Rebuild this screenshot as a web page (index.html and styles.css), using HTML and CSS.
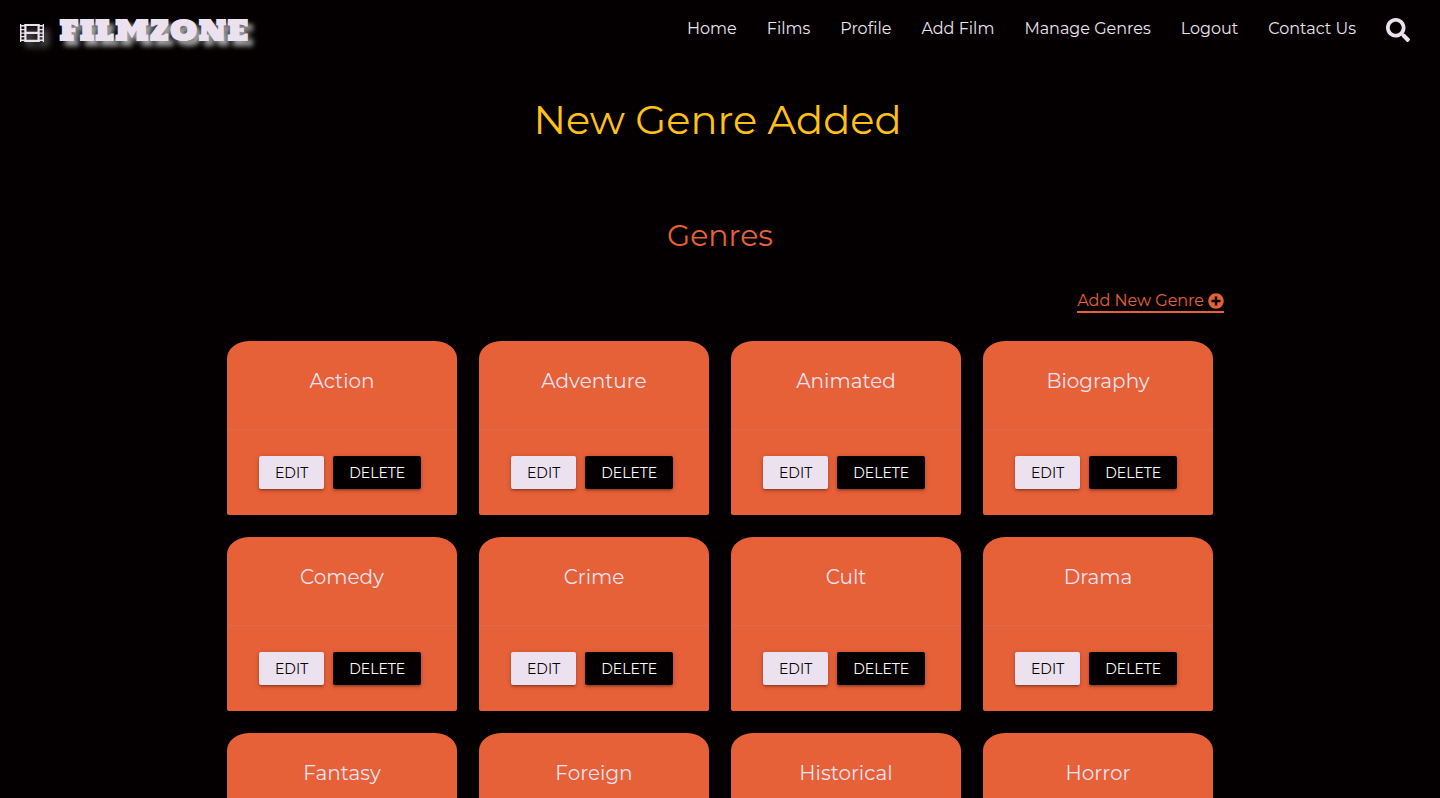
FILE: index.html
```html
<!DOCTYPE html>
<html lang="en">
<head>
<meta charset="utf-8">
<meta name="viewport" content="width=device-width, initial-scale=1">
<title>Filmzone - Genres</title>
<link rel="stylesheet" href="styles.css">
</head>
<body>
<header class="navbar">
  <a class="brand" href="#">
    <svg class="brand-icon" viewBox="0 0 24 18" aria-hidden="true">
      <path fill-rule="evenodd" d="M0 0h1.200v1h3V0h15.600v1h3V0H24v18h-1.200v-1h-3v1H4.200v-1h-3v1H0zM6.500 2v5.700h11V2zM6.500 10v5.700h11V10zM1.500 2.500V5h2.800V2.500zM1.500 6.200v2.300h2.800V6.200zM1.500 9.700V12h2.800V9.700zM1.500 13.200v2.300h2.800v-2.300zM19.700 2.500V5h2.800V2.500zM19.700 6.200v2.300h2.800V6.200zM19.700 9.700V12h2.800V9.700zM19.700 13.200v2.300h2.800v-2.300z"/>
    </svg>
    <span class="brand-name">FILMZONE</span>
  </a>
  <nav class="nav-links">
    <a href="#">Home</a>
    <a href="#">Films</a>
    <a href="#">Profile</a>
    <a href="#">Add Film</a>
    <a href="#">Manage Genres</a>
    <a href="#">Logout</a>
    <a href="#">Contact Us</a>
    <a class="search" href="#" aria-label="Search">
      <svg viewBox="0 0 512 512" aria-hidden="true"><path d="M505 442.7L405.3 343c-4.500-4.500-10.600-7-17-7H372c27.600-35.300 44-79.700 44-128C416 93.100 322.900 0 208 0S0 93.100 0 208s93.100 208 208 208c48.300 0 92.700-16.400 128-44v16.300c0 6.400 2.500 12.500 7 17l99.700 99.700c9.400 9.400 24.600 9.400 33.900 0l28.300-28.300c9.400-9.400 9.400-24.600.1-34zM208 336c-70.700 0-128-57.200-128-128 0-70.700 57.200-128 128-128 70.700 0 128 57.200 128 128 0 70.700-57.200 128-128 128z"/></svg>
    </a>
  </nav>
</header>
<main>
  <h1 class="flash">New Genre Added</h1>
  <h2 class="title">Genres</h2>
  <div class="container">
    <div class="toolbar">
      <a class="add-genre" href="#">Add New Genre
        <svg viewBox="0 0 512 512" aria-hidden="true"><path d="M256 8C119 8 8 119 8 256s111 248 248 248 248-111 248-248S393 8 256 8zm144 276c0 6.600-5.400 12-12 12h-92v92c0 6.600-5.400 12-12 12h-56c-6.600 0-12-5.400-12-12v-92h-92c-6.600 0-12-5.400-12-12v-56c0-6.600 5.400-12 12-12h92v-92c0-6.600 5.400-12 12-12h56c6.600 0 12 5.400 12 12v92h92c6.600 0 12 5.400 12 12v56z"/></svg>
      </a>
    </div>
    <div class="genres">
      <article class="card"><h3 class="card-title">Action</h3><div class="card-action"><button class="btn edit">EDIT</button><button class="btn delete">DELETE</button></div></article>
      <article class="card"><h3 class="card-title">Adventure</h3><div class="card-action"><button class="btn edit">EDIT</button><button class="btn delete">DELETE</button></div></article>
      <article class="card"><h3 class="card-title">Animated</h3><div class="card-action"><button class="btn edit">EDIT</button><button class="btn delete">DELETE</button></div></article>
      <article class="card"><h3 class="card-title">Biography</h3><div class="card-action"><button class="btn edit">EDIT</button><button class="btn delete">DELETE</button></div></article>
      <article class="card"><h3 class="card-title">Comedy</h3><div class="card-action"><button class="btn edit">EDIT</button><button class="btn delete">DELETE</button></div></article>
      <article class="card"><h3 class="card-title">Crime</h3><div class="card-action"><button class="btn edit">EDIT</button><button class="btn delete">DELETE</button></div></article>
      <article class="card"><h3 class="card-title">Cult</h3><div class="card-action"><button class="btn edit">EDIT</button><button class="btn delete">DELETE</button></div></article>
      <article class="card"><h3 class="card-title">Drama</h3><div class="card-action"><button class="btn edit">EDIT</button><button class="btn delete">DELETE</button></div></article>
      <article class="card"><h3 class="card-title">Fantasy</h3><div class="card-action"><button class="btn edit">EDIT</button><button class="btn delete">DELETE</button></div></article>
      <article class="card"><h3 class="card-title">Foreign</h3><div class="card-action"><button class="btn edit">EDIT</button><button class="btn delete">DELETE</button></div></article>
      <article class="card"><h3 class="card-title">Historical</h3><div class="card-action"><button class="btn edit">EDIT</button><button class="btn delete">DELETE</button></div></article>
      <article class="card"><h3 class="card-title">Horror</h3><div class="card-action"><button class="btn edit">EDIT</button><button class="btn delete">DELETE</button></div></article>
    </div>
  </div>
</main>
</body>
</html>
```
FILE: styles.css
```css
* { box-sizing: border-box; }

body {
  margin: 0;
  background: #040001;
  color: #ece2ef;
  font-family: Montserrat, Inter, "Open Sans", sans-serif;
  font-size: 16px;
}

a { color: inherit; text-decoration: none; }
h1, h2, h3 { margin: 0; font-weight: 400; }

.navbar {
  display: flex;
  justify-content: space-between;
  align-items: center;
  height: 60px;
  padding: 0 30px 0 20px;
}

.brand {
  display: flex;
  align-items: center;
  gap: 15px;
}

.brand-icon {
  width: 24px;
  height: 18px;
  margin-top: 5px;
  fill: #ece2ef;
  overflow: visible;
  filter: drop-shadow(5px 5px 3px #6a666b);
}

.brand-name {
  font: 400 30px/60px "Holtwood One SC", "Alfa Slab One", "DejaVu Serif", serif;
  text-shadow: 5px 5px 5px #a0a0a0;
}

.nav-links {
  display: flex;
  align-items: center;
  gap: 30px;
}

.nav-links a { line-height: 22px; padding-bottom: 2px; }
.nav-links .search { padding: 0; }

.search svg {
  display: block;
  width: 24px;
  height: 24px;
  fill: #ece2ef;
}

.flash {
  padding: 34px 5px 0 0;
  color: #ffc114;
  font-size: 40px;
  line-height: 52px;
  text-align: center;
}

.title {
  padding-top: 70px;
  color: #e66038;
  font-size: 30px;
  line-height: 40px;
  text-align: center;
}

.container {
  width: 70%;
  margin: 0 auto;
}

.toolbar {
  display: flex;
  justify-content: flex-end;
  padding: 35px 0 28px;
}

.add-genre {
  display: flex;
  align-items: center;
  gap: 4px;
  border-bottom: 2px solid #e66038;
  color: #e66038;
  line-height: 20px;
}

.add-genre svg {
  width: 16px;
  height: 16px;
  fill: #e66038;
}

.genres {
  display: grid;
  grid-template-columns: repeat(4, 1fr);
  gap: 22px;
  padding: 0 11px 22px;
}

.card {
  background: #e66038;
  border-radius: 10% 10% 2px 2px;
}

.card-title {
  padding: 24px 24px 32px;
  font-size: 20px;
  line-height: 32px;
  text-align: center;
}

.card-action {
  display: flex;
  gap: 9px;
  padding: 26px 32px;
  border-top: 1px solid #de6a48;
}

.btn {
  height: 33px;
  padding: 0 16px;
  border: 0;
  border-radius: 2px;
  font-family: inherit;
  font-size: 14px;
  box-shadow: 0 2px 2px rgba(0, 0, 0, .14), 0 3px 1px -2px rgba(0, 0, 0, .12), 0 1px 5px rgba(0, 0, 0, .2);
}

.edit { background: #ece2ef; color: #040001; }
.delete { background: #040001; color: #fff; }
```
